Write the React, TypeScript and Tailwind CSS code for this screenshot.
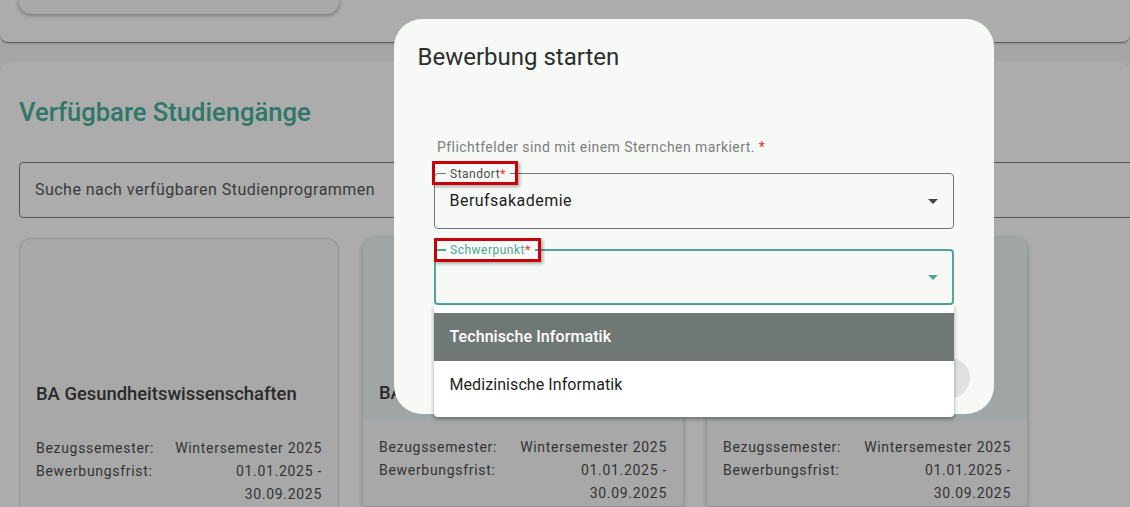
const CARDS = [
  { id: 1, title: 'BA Gesundheitswissenschaften', tinted: false },
  { id: 2, title: 'BA', tinted: true },
  { id: 3, title: '', tinted: true },
];

function Caret({ className }: { className: string }) {
  return (
    <svg viewBox="0 0 10 5" className={`h-[5px] w-[10px] ${className}`}>
      <path d="M0 0l5 5 5-5z" fill="currentColor" />
    </svg>
  );
}

function StudyCard({ title, tinted }: { title: string; tinted: boolean }) {
  return (
    <div
      className={`w-[320px] shrink-0 overflow-hidden rounded-t-[12px] bg-[#a8a8a8] ${
        tinted ? 'shadow-[0_1px_5px_rgba(0,0,0,0.3)]' : 'border border-b-0 border-[#8f9594]'
      }`}
    >
      <div className={`flex h-[182px] items-end pb-[13px] pl-[16px] ${tinted ? 'bg-[#a0a6a5]' : ''}`}>
        <h3 className="whitespace-nowrap text-[18.4px] font-medium leading-[28px] text-[#2a2a2a]">{title}</h3>
      </div>
      <div className="px-[16px] pt-[16px] text-[14px] leading-[23px] tracking-[0.7px] text-[#333]">
        <div className="flex justify-between">
          <span>Bezugssemester:</span>
          <span>Wintersemester 2025</span>
        </div>
        <div className="flex justify-between">
          <span>Bewerbungsfrist:</span>
          <span className="w-[100px] text-right">01.01.2025 - 30.09.2025</span>
        </div>
      </div>
    </div>
  );
}

export default function App() {
  return (
    <div className="relative h-[507px] w-[1130px] overflow-hidden bg-[#a6a6a6] font-['Roboto',sans-serif]">
      {/* Page behind the dialog */}
      <div className="h-[43px] rounded-b-[8px] border-b border-[#5f5f5f] bg-[#acacac] pl-[19px] shadow-[0_1px_2px_rgba(0,0,0,0.15)]">
        <div className="h-[14px] w-[320px] rounded-b-[12px] bg-[#a9a9a9] shadow-[0_1px_4px_rgba(0,0,0,0.4)]" />
      </div>
      <section className="mt-[19px] h-[445px] rounded-t-[12px] bg-[#acacac] pl-[19px]">
        <h2 className="pt-[34px] text-[25.6px] font-medium leading-[32px] text-[#2f7768]">Verfügbare Studiengänge</h2>
        <div className="mt-[34px] flex h-[56px] w-[1200px] items-center rounded-[4px] border border-[#555] pl-[15px] text-[16px] tracking-[0.47px] text-[#3a3a3a]">
          Suche nach verfügbaren Studienprogrammen
        </div>
        <div className="mt-[20px] flex gap-[24px]">
          {CARDS.map((card) => (
            <StudyCard key={card.id} title={card.title} tinted={card.tinted} />
          ))}
        </div>
      </section>

      {/* Dialog */}
      <div className="absolute left-[394px] top-[19px] h-[395px] w-[600px] rounded-[28px] bg-[#f7f9f6]">
        <h1 className="pl-[23.5px] pt-[22px] text-[24px] leading-[32px] text-[#2b2f2e]">Bewerbung starten</h1>
        <p className="pl-[43px] pt-[64px] text-[14px] leading-[20px] tracking-[0.44px] text-[#7b807e]">
          Pflichtfelder sind mit einem Sternchen markiert. <span className="text-[#d9362b]">*</span>
        </p>
        <div className="mx-[40px] mt-[16px] flex flex-col gap-[20px]">
          <div className="relative flex h-[56px] items-center justify-between rounded-[4px] border border-[#6f7673] pl-[14.5px] pr-[15px]">
            <span className="absolute -top-[7px] left-[11px] bg-[#f7f9f6] px-[4px] text-[12px] leading-[13px] tracking-[0.5px] text-[#4a504e]">
              Standort<span className="text-[13px] text-[#f03a2e]">*</span>
            </span>
            <span className="text-[16px] tracking-[0.47px] text-[#1c1f1e]">Berufsakademie</span>
            <Caret className="text-[#3f4543]" />
          </div>
          <div className="relative flex h-[56px] items-center justify-end rounded-[4px] border-2 border-[#50a596] pr-[14px]">
            <span className="absolute -top-[8px] left-[10px] bg-[#f7f9f6] px-[4px] text-[12px] leading-[13px] tracking-[0.5px] text-[#50a596]">
              Schwerpunkt<span className="text-[13px] text-[#f03a2e]">*</span>
            </span>
            <Caret className="text-[#50a596]" />
          </div>
        </div>
        <div className="absolute bottom-[16px] right-[24px] h-[40px] w-[60px] rounded-full bg-[#e0e2df]" />
      </div>

      {/* Open select menu */}
      <ul className="absolute left-[434px] top-[305px] w-[520px] rounded-b-[4px] bg-white py-[8px] text-[16px] tracking-[0.08px] shadow-[0_2px_4px_rgba(0,0,0,0.35)]">
        <li className="flex h-[48px] items-center bg-[#707875] pl-[15.5px] font-medium text-white">Technische Informatik</li>
        <li className="flex h-[48px] items-center pl-[15.5px] text-[#1c1f1e]">Medizinische Informatik</li>
      </ul>

      {/* Red annotation boxes */}
      <div className="absolute left-[432px] top-[161px] h-[24px] w-[86px] border-[3px] border-[#c8000a] shadow-[2px_2px_3px_rgba(0,0,0,0.3)]" />
      <div className="absolute left-[434px] top-[238px] h-[24px] w-[107px] border-[3px] border-[#c8000a] shadow-[2px_2px_3px_rgba(0,0,0,0.3)]" />
    </div>
  );
}
